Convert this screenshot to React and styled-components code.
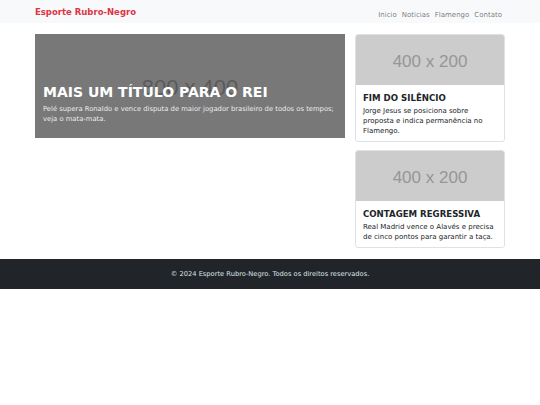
import React from 'react';
import styled, { createGlobalStyle } from 'styled-components';

const GlobalStyle = createGlobalStyle`
  * { box-sizing: border-box; }
  body {
    margin: 0;
    font-family: 'DejaVu Sans', Verdana, sans-serif;
    color: #212529;
    background: #fff;
  }
`;

const NavBar = styled.nav`
  background: #f8f9fa;
  height: 23px;
`;

const Container = styled.div`
  width: 470px;
  margin: 0 auto;
  height: 100%;
  display: flex;
  align-items: center;
  justify-content: space-between;
`;

const Brand = styled.a`
  color: #dc3545;
  font-weight: bold;
  font-size: 8.5px;
  text-decoration: none;
`;

const NavLinks = styled.ul`
  display: flex;
  gap: 5px;
  list-style: none;
  margin: 0;
  padding: 0 3px 0 0;
`;

const NavLink = styled.a`
  color: rgba(0, 0, 0, 0.55);
  font-size: 7px;
  text-decoration: none;
`;

const Main = styled.main`
  width: 470px;
  margin: 11px auto 11px;
  display: flex;
  gap: 10px;
  align-items: flex-start;
`;

const Hero = styled.section`
  position: relative;
  width: 310px;
  height: 104px;
  background: #787878;
  display: flex;
  align-items: center;
  justify-content: center;
  overflow: hidden;
`;

const HeroPlaceholder = styled.span`
  font-family: 'Liberation Sans', Arial, sans-serif;
  font-size: 22px;
  color: #5a5a5a;
  padding-top: 3px;
`;

const HeroCaption = styled.div`
  position: absolute;
  left: 8px;
  right: 4px;
  bottom: 14px;
`;

const HeroTitle = styled.h1`
  margin: 0 0 3px;
  color: #fff;
  font-size: 14px;
  line-height: 17px;
  font-weight: bold;
`;

const HeroText = styled.p`
  margin: 0;
  color: #e9ecef;
  font-size: 6.8px;
  line-height: 10px;
`;

const Sidebar = styled.aside`
  width: 150px;
  display: flex;
  flex-direction: column;
  gap: 8px;
`;

const Card = styled.article`
  border: 1px solid #dee2e6;
  border-radius: 3px;
  overflow: hidden;
  background: #fff;
`;

const CardImage = styled.div`
  height: 50px;
  padding-top: 3px;
  background: #cccccc;
  display: flex;
  align-items: center;
  justify-content: center;
  font-family: 'Liberation Sans', Arial, sans-serif;
  font-size: 17px;
  color: #969696;
`;

const CardBody = styled.div`
  padding: 8px 7px 5px;
`;

const CardTitle = styled.h2`
  margin: 0 0 3px;
  font-size: 8.6px;
  line-height: 10px;
  font-weight: bold;
  color: #212529;
`;

const CardText = styled.p`
  margin: 0;
  font-size: 7px;
  line-height: 10px;
  color: #212529;
`;

const Footer = styled.footer`
  background: #212529;
  height: 30px;
  display: flex;
  align-items: center;
  justify-content: center;
  color: #dee2e6;
  font-size: 6.7px;
`;

const links = ['Inicio', 'Noticias', 'Flamengo', 'Contato'];

const cards = [
  {
    title: 'FIM DO SILÊNCIO',
    text: 'Jorge Jesus se posiciona sobre proposta e indica permanência no Flamengo.',
  },
  {
    title: 'CONTAGEM REGRESSIVA',
    text: 'Real Madrid vence o Alavés e precisa de cinco pontos para garantir a taça.',
  },
];

export default function App() {
  return (
    <>
      <GlobalStyle />
      <NavBar>
        <Container>
          <Brand href="#">Esporte Rubro-Negro</Brand>
          <NavLinks>
            {links.map((l) => (
              <li key={l}>
                <NavLink href="#">{l}</NavLink>
              </li>
            ))}
          </NavLinks>
        </Container>
      </NavBar>
      <Main>
        <Hero>
          <HeroPlaceholder>800 x 400</HeroPlaceholder>
          <HeroCaption>
            <HeroTitle>MAIS UM TÍTULO PARA O REI</HeroTitle>
            <HeroText>
              Pelé supera Ronaldo e vence disputa de maior jogador brasileiro de
              todos os tempos; veja o mata-mata.
            </HeroText>
          </HeroCaption>
        </Hero>
        <Sidebar>
          {cards.map((c) => (
            <Card key={c.title}>
              <CardImage>400 x 200</CardImage>
              <CardBody>
                <CardTitle>{c.title}</CardTitle>
                <CardText>{c.text}</CardText>
              </CardBody>
            </Card>
          ))}
        </Sidebar>
      </Main>
      <Footer>© 2024 Esporte Rubro-Negro. Todos os direitos reservados.</Footer>
    </>
  );
}
